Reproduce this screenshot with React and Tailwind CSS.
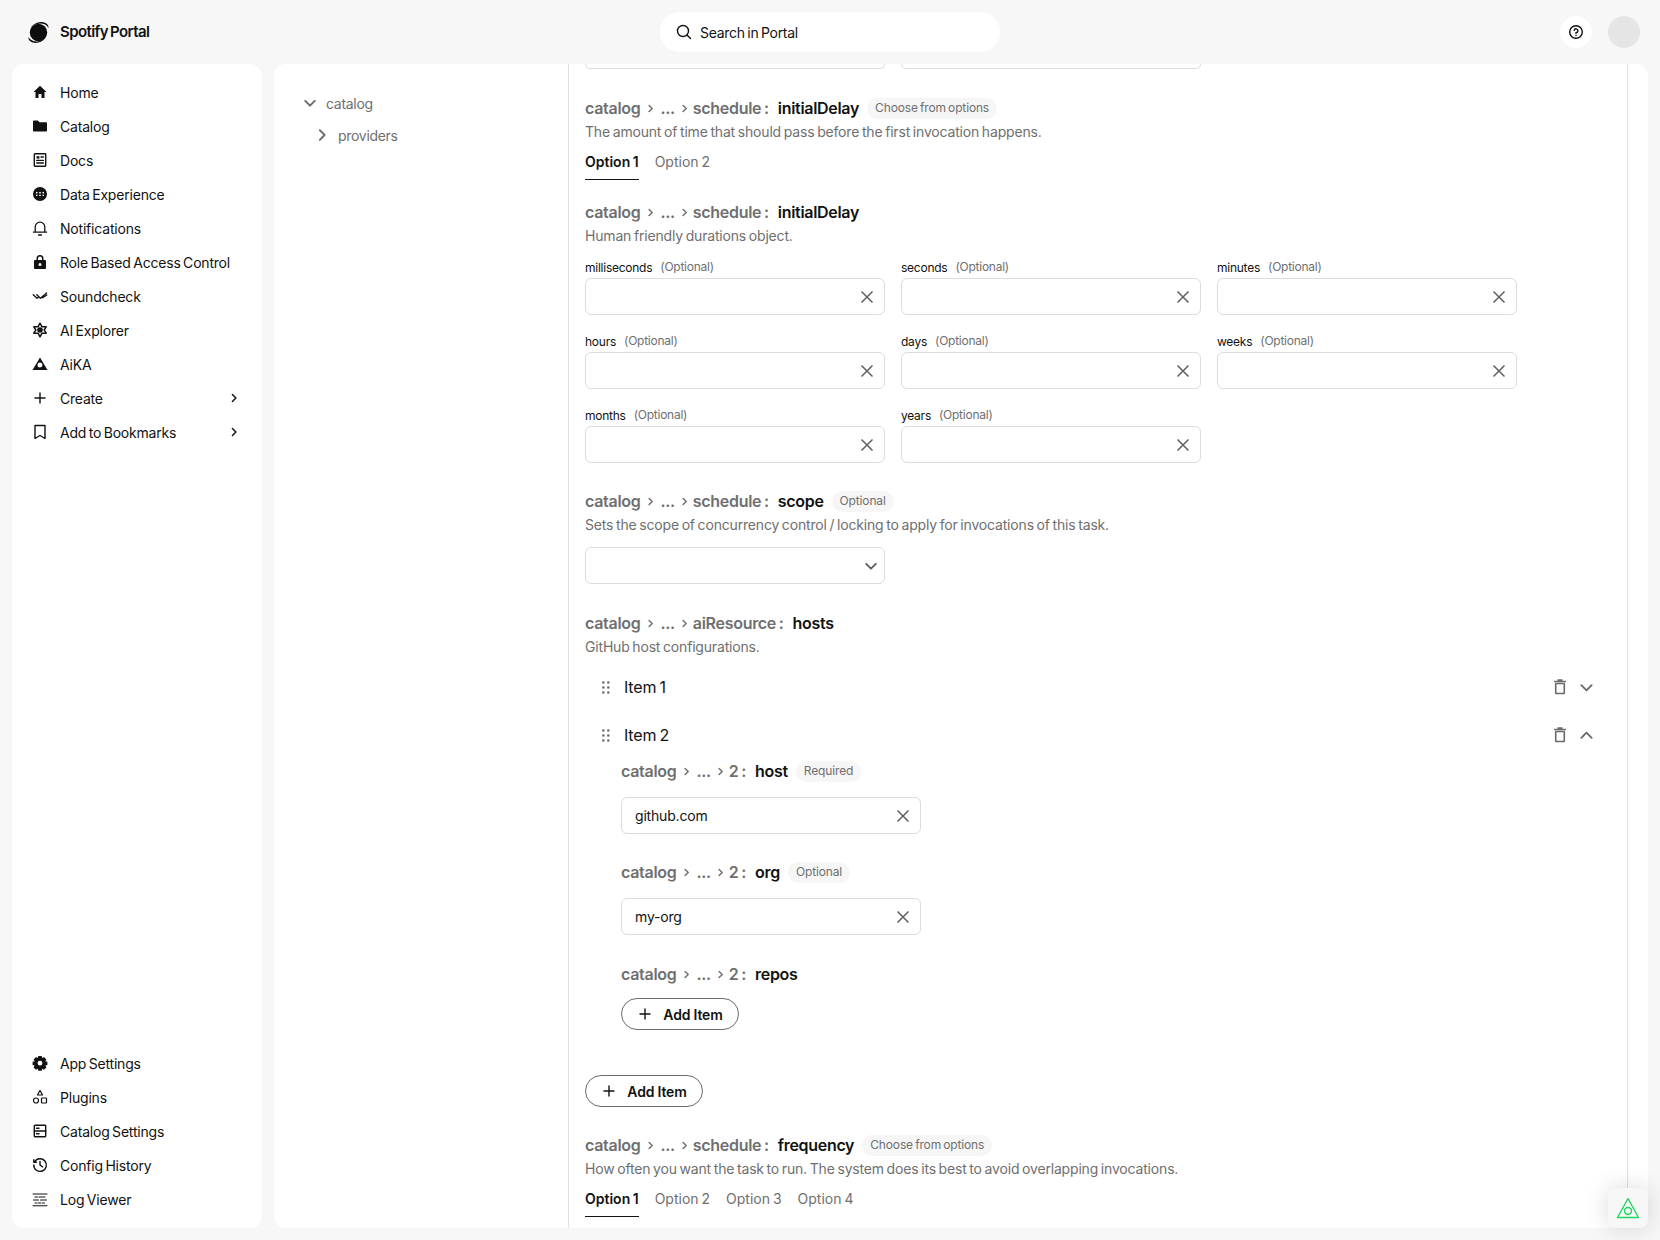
import React from "react";

const S = ({ children, fill = "currentColor", stroke = "none", sw = 0, size = 16, cls = "" }) => (
  <svg width={size} height={size} viewBox="0 0 16 16" fill={fill} stroke={stroke} strokeWidth={sw} strokeLinecap="round" strokeLinejoin="round" className={cls}>
    {children}
  </svg>
);

const icons = {
  home: <S><path d="M8 1.800 1.500 8h2v6h3V10h3v4h3V8h2z" /></S>,
  folder: <S><path d="M1 3.200C1 2.800 1.300 2.500 1.700 2.500h4.200l1.600 1.800h6.800c.4 0 .7.3.7.7v7.800c0 .4-.3.7-.7.7H1.700c-.4 0-.7-.3-.7-.7z" /></S>,
  docs: <S fill="none" stroke="currentColor" sw={1.4}><rect x="2.300" y="1.800" width="11.400" height="12.400" rx="0.600" /><rect x="4.600" y="4.200" width="2.800" height="2.400" fill="currentColor" stroke="none" /><path d="M9 5h2.400M4.700 8.400h6.700M4.700 11h6.700" /></S>,
  data: <S><path fillRule="evenodd" d="M8 1a7 7 0 1 1 0 14A7 7 0 0 1 8 1zM4 6v1.400h1.500V6zm3.200 0v1.400h1.600V6zm3.300 0v1.400H12V6zM4 8.700v1.400h1.500V8.700zm3.200 0v1.400h1.600V8.700zm3.300 0v1.400H12V8.700z" /></S>,
  bell: <S fill="none" stroke="currentColor" sw={1.300}><path d="M1.500 12.200h13M3.200 12V7a4.800 4.800 0 0 1 9.600 0v5" /><path d="M6.500 15h3" /></S>,
  lock: <S><path fillRule="evenodd" d="M4.500 6V4.500a3.500 3.500 0 0 1 7 0V6h1.700c.4 0 .8.3.8.8v7.400c0 .4-.4.8-.8.8H2.800c-.4 0-.8-.4-.8-.8V6.800c0-.5.4-.8.8-.8zM6 6h4V4.500a2 2 0 0 0-4 0zm2 3a1.500 1.500 0 1 0 0 3 1.500 1.500 0 0 0 0-3z" /></S>,
  check: <S fill="none" stroke="currentColor" sw={1.300}><path d="M1.200 6.800 5 10.300 6.800 8.800M4.800 6.800 8.400 10.300 14.600 5M10.600 9.800 14.800 7" /></S>,
  star: <S fill="none" stroke="currentColor" sw={1.500}><path d="M8 1.200 10 4.800H14.200L12.200 8 14.200 11.200H10L8 14.800 6 11.200H1.800L3.800 8 1.800 4.800H6z" /><circle cx="8" cy="8" r="2.800" fill="currentColor" stroke="none" /></S>,
  triangle: <S><path fillRule="evenodd" d="M8 1.500 15.500 14H.5zM8 6.500a2.500 2.500 0 1 0 0 5 2.500 2.500 0 0 0 0-5z" /></S>,
  plus: <S fill="none" stroke="currentColor" sw={1.400}><path d="M8 3v10M3 8h10" /></S>,
  bookmark: <S fill="none" stroke="currentColor" sw={1.400}><path d="M3 1.500h10V14.500L8 11.500 3 14.500z" /></S>,
  gear: <S><path fillRule="evenodd" d="M6.300 1h3.400l.5 2 1.800-1 2.400 2.400-1 1.800 2 .5v3.400l-2 .5 1 1.800L12 14.800l-1.800-1-.5 2H6.300l-.5-2-1.800 1L1.600 12.400l1-1.800-2-.5V6.700l2-.5-1-1.800L4 2l1.800 1zM8 5.800a2.400 2.400 0 1 0 0 4.800 2.400 2.400 0 0 0 0-4.800z" /></S>,
  plugins: <S fill="none" stroke="currentColor" sw={1.200}><path d="M8 1.500 10.500 6h-5z" /><circle cx="4" cy="11.500" r="2.500" /><rect x="9.500" y="9" width="5" height="5" rx="0.400" /></S>,
  settings: <S fill="none" stroke="currentColor" sw={1.400}><rect x="2.300" y="2.300" width="11.400" height="11.400" rx="0.600" /><path d="M2.300 8h11.400M4.500 5.200h2.500M4.500 10.800h2.500" /></S>,
  history: <S fill="none" stroke="currentColor" sw={1.400}><path d="M2.600 5A6.300 6.300 0 1 1 1.800 8M1.800 2.600V5.200H4.400M8 4.500V8l2.600 1.800" /></S>,
  log: <S fill="none" stroke="currentColor" sw={1.100}><path d="M1 3h14M3 6h2.500M7 6h6M1.500 9h5M8.500 9h6M3 12h1.500M6 12h3M10.500 12h2M1 14.800h14" /></S>,
};

const Chevron = ({ dir = "right", size = 12, sw = 2.200, cls = "" }) => {
  const d = { right: "M5.500 2.500 11 8 5.500 13.500", down: "M2.500 5.500 8 11 13.500 5.500", up: "M2.500 10.500 8 5 13.500 10.500" }[dir];
  return (
    <svg width={size} height={size} viewBox="0 0 16 16" fill="none" stroke="currentColor" strokeWidth={sw} strokeLinecap="round" strokeLinejoin="round" className={`shrink-0 ${cls}`}>
      <path d={d} />
    </svg>
  );
};

const NavItem = ({ icon, label, chevron }) => (
  <div className="flex h-[34px] items-center pl-[20px] pr-[23px] text-[14px] tracking-[-0.2px] text-[#121212] [word-spacing:-1.2px]">
    <span className="flex h-4 w-4 shrink-0 items-center justify-center">{icons[icon]}</span>
    <span className="ml-[12px] flex-1">{label}</span>
    {chevron && <Chevron dir="right" size={10} sw={2.400} />}
  </div>
);

const XIcon = () => (
  <svg width="14" height="14" viewBox="0 0 14 14" fill="none" stroke="#5f5f5f" strokeWidth="1.500" className="shrink-0">
    <path d="M1.500 1.500 12.500 12.500M12.500 1.500 1.500 12.500" />
  </svg>
);

const Heading = ({ path, name, pill, cls = "" }) => (
  <div className={`flex h-6 items-center text-[16px] font-semibold leading-6 tracking-[-0.3px] ${cls}`}>
    <span className="text-[#6f6f6f]">catalog</span>
    <Chevron dir="right" size={9} sw={2.600} cls="ml-[6px] mr-[5px] text-[#6f6f6f]" />
    <span className="text-[#6f6f6f]">...</span>
    <Chevron dir="right" size={9} sw={2.600} cls="ml-[5px] mr-[4px] text-[#6f6f6f]" />
    <span className="text-[#6f6f6f]">{path} :</span>
    <span className="ml-[9px] text-[#121212]">{name}</span>
    {pill && (
      <span className="ml-2 flex h-[21px] items-center rounded-full bg-[#f6f6f6] px-2 text-[12px] font-normal tracking-[-0.15px] text-[#6f6f6f]">{pill}</span>
    )}
  </div>
);

const Desc = ({ children }) => <div className="mt-[2px] h-5 text-[14px] leading-5 text-[#6f6f6f]">{children}</div>;

const Tabs = ({ items }) => (
  <div className="mt-[2px] flex gap-4 text-[14px] tracking-normal">
    {items.map((t, i) => (
      <div key={t} className={`flex h-[36px] items-center border-b ${i === 0 ? "border-[#121212] font-semibold text-[#121212]" : "border-transparent text-[#6f6f6f]"}`}>{t}</div>
    ))}
  </div>
);

const Input = ({ value, cls = "" }) => (
  <div className={`flex h-[37px] w-[300px] items-center justify-between rounded-md border border-[#dcdcdc] bg-white pl-[13px] pr-[10px] text-[14px] text-[#121212] ${cls}`}>
    <span>{value}</span>
    <XIcon />
  </div>
);

const Field = ({ label }) => (
  <div className="w-[300px]">
    <div className="flex h-[21px] items-center text-[12px] tracking-[-0.25px] text-[#121212]">
      <span>{label}</span>
      <span className="ml-2 -translate-y-px text-[#6f6f6f]">(Optional)</span>
    </div>
    <Input />
  </div>
);

const AddItem = ({ cls = "" }) => (
  <div className={`flex h-[32px] w-[118px] items-center justify-center gap-[10px] rounded-full border border-[#6b6b6b] bg-white text-[14px] font-semibold text-[#121212] [word-spacing:0px] ${cls}`}>
    {icons.plus}
    <span>Add Item</span>
  </div>
);

const Trash = () => (
  <svg width="14" height="16" viewBox="0 0 14 16" fill="none" stroke="#6b6b6b" strokeWidth="1.600" className="shrink-0">
    <path d="M1 2.500h12M4.500 1h5" />
    <rect x="2.700" y="4.500" width="8.600" height="10" rx="0.500" />
  </svg>
);

const Grip = () => (
  <svg width="8" height="13" viewBox="0 0 8 13" fill="#6f6f6f" className="shrink-0">
    {[1.500, 6.500, 11.500].flatMap((y) => [1.300, 6.300].map((x) => <circle key={`${x}${y}`} cx={x} cy={y} r="1.300" />))}
  </svg>
);

const ItemRow = ({ label, dir, cls = "" }) => (
  <div className={`flex h-6 items-center pl-[17px] pr-[17px] ${cls}`}>
    <Grip />
    <span className="ml-[14px] flex-1 text-[16px] text-[#121212]">{label}</span>
    <Trash />
    <Chevron dir={dir} size={15} sw={2} cls="ml-[12px] text-[#6b6b6b]" />
  </div>
);

export default function App() {
  return (
    <div
      className="flex h-[1240px] w-[1660px] flex-col overflow-hidden bg-[#f7f7f7] tracking-[-0.18px] text-[#121212] [word-spacing:-1px]"
      style={{ fontFamily: 'Inter, "Liberation Sans", sans-serif' }}
    >
      <header className="relative flex h-16 shrink-0 items-center pl-[26px] pr-[20px]">
        <div className="flex w-[634px] items-center">
          <svg width="25" height="25" viewBox="0 0 25 25" className="shrink-0">
            <circle cx="12.500" cy="12.500" r="8.700" fill="#0d0d0d" />
            <path d="M5 8C7.500 3.500 13 1.500 17 2.200 20.500 2.800 23 5 22.500 8 21 4.800 17.500 3.500 14 3.600 10 3.700 7 5.500 5 8z" fill="#0d0d0d" />
            <path d="M20 17C17.500 21.500 12 23.500 8 22.800 4.500 22.200 2 20 2.500 17 4 20.200 7.500 21.500 11 21.400 15 21.300 18 19.500 20 17z" fill="#0d0d0d" />
          </svg>
          <span className="ml-[9px] text-[15px] font-semibold tracking-[-0.6px]">Spotify Portal</span>
        </div>
        <div className="flex h-10 w-[340px] items-center rounded-full bg-white pl-4 text-[14px] tracking-[-0.3px]">
          <svg width="16" height="16" viewBox="0 0 16 16" fill="none" stroke="#121212" strokeWidth="1.400" strokeLinecap="round">
            <circle cx="7" cy="7" r="5.500" /><path d="M11 11l3.500 3.500" />
          </svg>
          <span className="ml-[8px]">Search in Portal</span>
        </div>
        <div className="ml-auto flex items-center gap-4">
          <div className="flex h-8 w-8 items-center justify-center rounded-full bg-white">
            <svg width="16" height="16" viewBox="0 0 16 16" fill="none" stroke="#121212" strokeWidth="1.400" strokeLinecap="round">
              <circle cx="8" cy="8" r="6.300" /><path d="M6.200 6.300A1.900 1.900 0 1 1 8 8.600V9.300" /><path d="M8 11.300v.2" />
            </svg>
          </div>
          <div className="h-8 w-8 rounded-full bg-[#e5e5e5]" />
        </div>
      </header>

      <div className="flex min-h-0 flex-1 gap-3 pb-3 pl-3 pr-3">
        <nav className="flex w-[250px] shrink-0 flex-col justify-between rounded-xl bg-white pb-[12px] pt-[11px]">
          <div>
            <NavItem icon="home" label="Home" />
            <NavItem icon="folder" label="Catalog" />
            <NavItem icon="docs" label="Docs" />
            <NavItem icon="data" label="Data Experience" />
            <NavItem icon="bell" label="Notifications" />
            <NavItem icon="lock" label="Role Based Access Control" />
            <NavItem icon="check" label="Soundcheck" />
            <NavItem icon="star" label="AI Explorer" />
            <NavItem icon="triangle" label="AiKA" />
            <NavItem icon="plus" label="Create" chevron />
            <NavItem icon="bookmark" label="Add to Bookmarks" chevron />
          </div>
          <div>
            <NavItem icon="gear" label="App Settings" />
            <NavItem icon="plugins" label="Plugins" />
            <NavItem icon="settings" label="Catalog Settings" />
            <NavItem icon="history" label="Config History" />
            <NavItem icon="log" label="Log Viewer" />
          </div>
        </nav>

        <main className="flex min-w-0 flex-1 overflow-hidden rounded-xl bg-white">
          <aside className="w-[294px] shrink-0 pl-[29px] pt-[29px] text-[14px] tracking-[-0.3px] text-[#6f6f6f]">
            <div className="flex h-5 items-center">
              <Chevron dir="down" size={14} cls="text-[#6b6b6b]" />
              <span className="ml-[9px]">catalog</span>
            </div>
            <div className="mt-3 flex h-5 items-center pl-3">
              <Chevron dir="right" size={14} cls="text-[#6b6b6b]" />
              <span className="ml-[9px]">providers</span>
            </div>
          </aside>

          <section className="w-[1060px] shrink-0 border-x border-[#e0e0e0] px-4">
            <div className="flex gap-4">
              <div className="h-[5px] w-[300px] rounded-b-md border-x border-b border-[#dcdcdc]" />
              <div className="h-[5px] w-[300px] rounded-b-md border-x border-b border-[#dcdcdc]" />
            </div>

            <Heading path="schedule" name="initialDelay" pill="Choose from options" cls="mt-[27px]" />
            <Desc>The amount of time that should pass before the first invocation happens.</Desc>
            <Tabs items={["Option 1", "Option 2"]} />

            <Heading path="schedule" name="initialDelay" cls="mt-[20px]" />
            <Desc>Human friendly durations object.</Desc>

            <div className="mt-[11px] grid w-[932px] grid-cols-3 gap-x-4 gap-y-[16px]">
              {["milliseconds", "seconds", "minutes", "hours", "days", "weeks", "months", "years"].map((l) => (
                <Field key={l} label={l} />
              ))}
            </div>

            <Heading path="schedule" name="scope" pill="Optional" cls="mt-[26px]" />
            <Desc>Sets the scope of concurrency control / locking to apply for invocations of this task.</Desc>
            <div className="mt-[12px] flex h-[37px] w-[300px] items-center justify-end rounded-md border border-[#dcdcdc] pr-[6px] text-[#5f5f5f]">
              <Chevron dir="down" size={14} />
            </div>

            <Heading path="aiResource" name="hosts" cls="mt-[27px]" />
            <Desc>GitHub host configurations.</Desc>

            <ItemRow label="Item 1" dir="down" cls="mt-[18px]" />
            <ItemRow label="Item 2" dir="up" cls="mt-[24px]" />

            <div className="pl-9">
              <Heading path="2" name="host" pill="Required" cls="mt-[12px]" />
              <Input value="github.com" cls="mt-[14px]" />
              <Heading path="2" name="org" pill="Optional" cls="mt-[26px]" />
              <Input value="my-org" cls="mt-[14px]" />
              <Heading path="2" name="repos" cls="mt-[27px]" />
              <AddItem cls="mt-[12px]" />
            </div>

            <AddItem cls="mt-[45px]" />
            <Heading path="schedule" name="frequency" pill="Choose from options" cls="mt-[26px]" />
            <Desc>How often you want the task to run. The system does its best to avoid overlapping invocations.</Desc>
            <Tabs items={["Option 1", "Option 2", "Option 3", "Option 4"]} />
          </section>
        </main>
      </div>

      <div className="absolute bottom-[12px] left-[1608px] flex h-10 w-10 items-center justify-center rounded-lg bg-[#f7f7f7] shadow-[0_0_24px_rgba(0,0,0,0.15)]">
        <svg width="24" height="24" viewBox="0 0 24 24" fill="none" stroke="#1ed760" strokeWidth="1.400" strokeLinejoin="round">
          <path d="M12 2.500 22.500 21.500H1.500z" /><circle cx="12" cy="15" r="3.500" />
        </svg>
      </div>
    </div>
  );
}
